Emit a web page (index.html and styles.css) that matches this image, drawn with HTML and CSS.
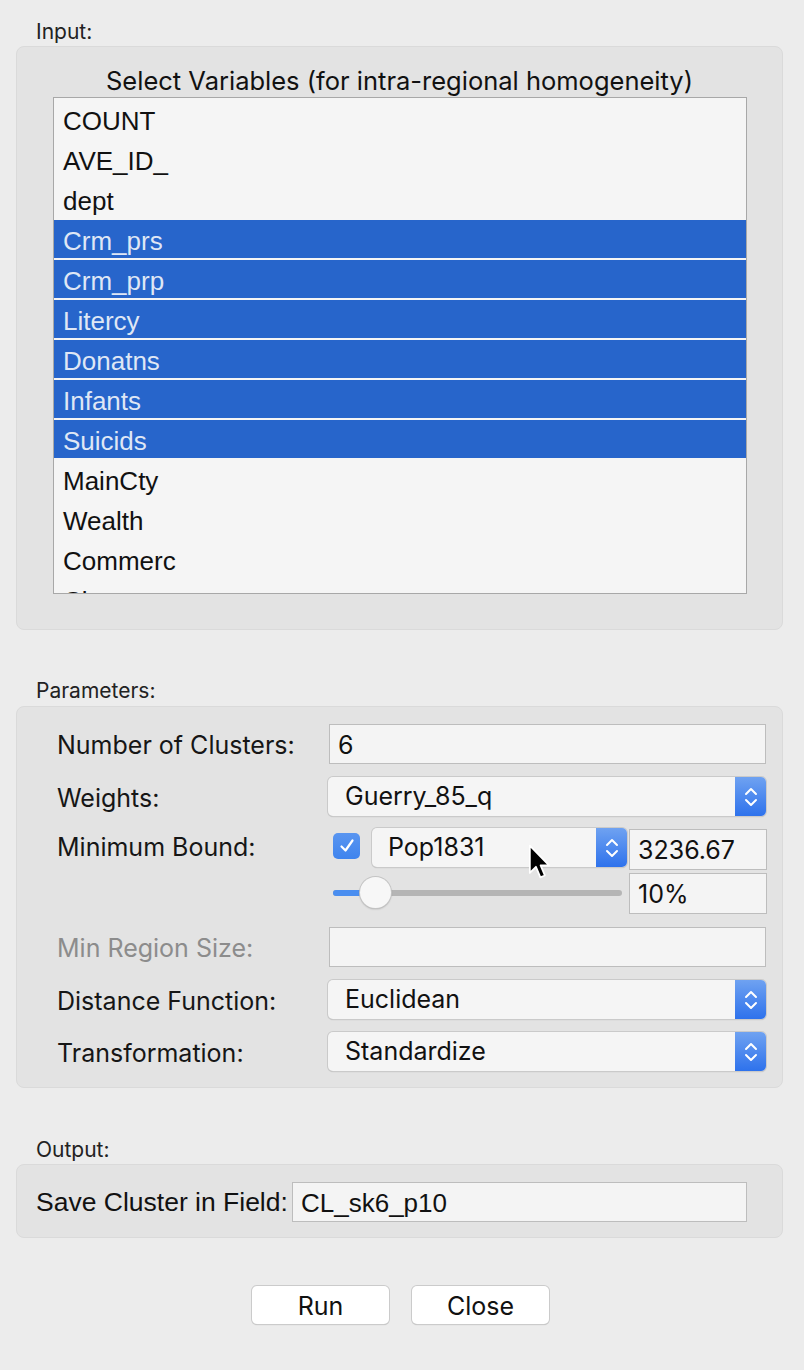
FILE: index.html
```html
<!DOCTYPE html>
<html>
<head>
<meta charset="utf-8">
<link rel="stylesheet" href="styles.css">
</head>
<body>
<div class="dialog">
  <div class="sec-label lbl-input">Input:</div>
  <div class="group input-group">
    <div class="heading">Select Variables (for intra-regional homogeneity)</div>
    <div class="list">
      <div class="row">COUNT</div>
      <div class="row">AVE_ID_</div>
      <div class="row">dept</div>
      <div class="row sel">Crm_prs</div>
      <div class="row sel">Crm_prp</div>
      <div class="row sel">Litercy</div>
      <div class="row sel">Donatns</div>
      <div class="row sel">Infants</div>
      <div class="row sel">Suicids</div>
      <div class="row">MainCty</div>
      <div class="row">Wealth</div>
      <div class="row">Commerc</div>
      <div class="row">Clergy</div>
    </div>
  </div>

  <div class="sec-label lbl-params">Parameters:</div>
  <div class="group params">
    <div class="prow r1">
      <div class="plabel">Number of Clusters:</div>
      <div class="tfield wide">6</div>
    </div>
    <div class="prow r2">
      <div class="plabel">Weights:</div>
      <div class="select wide"><span class="sval">Guerry_85_q</span><span class="stepper"><svg width="16" height="24" viewBox="0 0 16 24"><path d="M3 9 L8 4 L13 9 M3 15 L8 20 L13 15" fill="none" stroke="#fff" stroke-width="2" stroke-linecap="round" stroke-linejoin="round"/></svg></span></div>
    </div>
    <div class="prow r3">
      <div class="plabel">Minimum Bound:</div>
      <div class="bound">
        <div class="bound-top">
          <span class="check"><svg width="18" height="18" viewBox="0 0 18 18"><path d="M3.5 9.5 L7.5 13.5 L14.5 3.5" fill="none" stroke="#fff" stroke-width="2.2" stroke-linecap="round" stroke-linejoin="round"/></svg></span>
          <div class="select small"><span class="sval">Pop1831</span><span class="stepper"><svg width="16" height="24" viewBox="0 0 16 24"><path d="M3 9 L8 4 L13 9 M3 15 L8 20 L13 15" fill="none" stroke="#fff" stroke-width="2" stroke-linecap="round" stroke-linejoin="round"/></svg></span></div>
          <div class="tfield num">3236.67</div>
        </div>
        <div class="bound-bot">
          <div class="slider"><div class="track"><div class="fill"></div></div><div class="knob"></div></div>
          <div class="tfield num pct">10%</div>
        </div>
      </div>
    </div>
    <div class="prow r5">
      <div class="plabel dis">Min Region Size:</div>
      <div class="tfield wide"></div>
    </div>
    <div class="prow r6">
      <div class="plabel">Distance Function:</div>
      <div class="select wide"><span class="sval">Euclidean</span><span class="stepper"><svg width="16" height="24" viewBox="0 0 16 24"><path d="M3 9 L8 4 L13 9 M3 15 L8 20 L13 15" fill="none" stroke="#fff" stroke-width="2" stroke-linecap="round" stroke-linejoin="round"/></svg></span></div>
    </div>
    <div class="prow r7">
      <div class="plabel">Transformation:</div>
      <div class="select wide"><span class="sval">Standardize</span><span class="stepper"><svg width="16" height="24" viewBox="0 0 16 24"><path d="M3 9 L8 4 L13 9 M3 15 L8 20 L13 15" fill="none" stroke="#fff" stroke-width="2" stroke-linecap="round" stroke-linejoin="round"/></svg></span></div>
    </div>
  </div>

  <div class="sec-label lbl-output">Output:</div>
  <div class="group output">
    <div class="olabel">Save Cluster in Field:</div>
    <div class="tfield ofield">CL_sk6_p10</div>
  </div>

  <div class="buttons">
    <div class="btn">Run</div>
    <div class="btn">Close</div>
  </div>
</div>
<svg class="cursor" width="27" height="40" viewBox="0 0 24 36"><path d="M1.5 1.5 L1.5 26 L7 20.5 L11 30 L15 28.3 L11.2 19.2 L18.8 19.2 Z" fill="#000" stroke="#fff" stroke-width="1.6" stroke-linejoin="round"/></svg>
</body>
</html>
```

FILE: styles.css
```css
html, body {
  margin: 0;
  padding: 0;
  background: #ececec;
}
body {
  width: 804px;
  height: 1370px;
  position: relative;
  font-family: "Inter", "Liberation Sans", Arial, sans-serif;
  color: #1c1c1c;
  overflow: hidden;
}
.dialog {
  padding: 0 21px 0 16px;
  display: flex;
  flex-direction: column;
}
.sec-label {
  font-size: 21px;
  line-height: 24px;
  height: 24px;
  padding-left: 20px;
  color: #222;
}
.lbl-input { margin-top: 20px; margin-bottom: 2px; }
.lbl-params { margin-top: 49px; margin-bottom: 3px; }
.lbl-output { margin-top: 50px; margin-bottom: 2px; }
.group {
  background: #e3e3e3;
  border: 1px solid #dadada;
  border-radius: 8px;
  box-sizing: border-box;
}
.input-group {
  height: 584px;
  padding: 18px 0 0 36px;
}
.heading {
  font-size: 25.5px;
  line-height: 31px;
  height: 31px;
  text-align: center;
  padding-right: 36px;
  margin-bottom: 1px;
  color: #111;
  white-space: nowrap;
}
.list {
  width: 694px;
  height: 497px;
  box-sizing: border-box;
  background: #f5f5f5;
  border: 1px solid #a8a8a8;
  overflow: hidden;
  padding-top: 2px;
}
.row {
  height: 40px;
  line-height: 42px;
  font-family: "Liberation Sans", Arial, sans-serif;
  font-size: 26px;
  padding-left: 9px;
  color: #111;
}
.row.sel {
  background: #2765cb;
  color: #dfe7f5;
  height: 38px;
  line-height: 42px;
  border-bottom: 2px solid #f5f5f5;
}
.params {
  height: 382px;
  padding: 17px 16px 0 40px;
  display: flex;
  flex-direction: column;
}
.prow {
  display: flex;
  align-items: flex-start;
  flex: none;
}
.plabel {
  width: 271px;
  font-size: 25px;
  line-height: 42px;
  flex: none;
  color: #161616;
  white-space: nowrap;
}
.plabel.dis { color: #8c8c8c; }
.r1 { height: 40px; }
.r2 { margin-top: 13px; height: 39px; }
.r3 { margin-top: 12px; height: 86px; }
.r3 .plabel { line-height: 38px; }
.r5 { margin-top: 13px; height: 40px; }
.r6 { margin-top: 13px; height: 39px; }
.r7 { margin-top: 13px; height: 39px; }
.tfield {
  box-sizing: border-box;
  height: 40px;
  background: #f4f4f4;
  border: 1px solid #bdbdbd;
  font-size: 25px;
  line-height: 41px;
  padding-left: 8px;
  color: #111;
  white-space: nowrap;
}
.tfield.wide { width: 438px; margin-left: 1px; }
.select {
  box-sizing: border-box;
  height: 39px;
  background: #f5f5f5;
  border-radius: 5px;
  box-shadow: 0 0 0 1px #cacaca, 0 1px 1px rgba(0,0,0,0.25);
  display: flex;
  align-items: center;
  overflow: hidden;
  font-size: 25px;
  color: #111;
}
.select.wide { width: 438px; }
.sval { flex: 1; padding-left: 17px; line-height: 41px; white-space: nowrap; }
.select.small .sval { padding-left: 16px; }
.stepper {
  width: 31px;
  height: 100%;
  background: linear-gradient(#6fa2f1, #2e72ec);
  display: flex;
  align-items: center;
  justify-content: center;
}
.bound { display: flex; flex-direction: column; }
.bound-top { display: flex; align-items: flex-start; height: 41px; }
.check {
  width: 27px;
  height: 26px;
  margin-top: 5px;
  margin-left: 5px;
  border-radius: 5px;
  background: linear-gradient(#5995f0, #3f84ee);
  display: flex;
  align-items: center;
  justify-content: center;
}
.select.small { width: 255px; margin-left: 12px; }
.tfield.num { width: 138px; margin-left: 2px; margin-top: 1px; height: 41px; }
.bound-bot { display: flex; margin-top: 4px; }
.slider {
  width: 289px;
  height: 40px;
  margin-left: 5px;
  position: relative;
}
.track {
  position: absolute;
  left: 0; right: 0; top: 17px;
  height: 6px;
  border-radius: 3px;
  background: #b5b5b5;
  overflow: hidden;
}
.fill { width: 30px; height: 100%; background: #4a8ef0; }
.knob {
  position: absolute;
  left: 27px;
  top: 4px;
  width: 31px;
  height: 31px;
  border-radius: 50%;
  background: #f7f7f7;
  box-shadow: 0 0 0 1px #c4c4c4, 0 1px 2px rgba(0,0,0,0.3);
}
.tfield.pct { margin-left: 7px; margin-top: 0; height: 41px; }
.output {
  height: 74px;
  display: flex;
  align-items: center;
  padding-left: 19px;
  padding-top: 2px;
}
.olabel {
  font-family: "Liberation Sans", Arial, sans-serif;
  font-size: 26.5px;
  width: 256px;
  flex: none;
  white-space: nowrap;
  color: #111;
}
.ofield {
  width: 455px;
  font-family: "Liberation Sans", Arial, sans-serif;
  font-size: 26px;
}
.buttons {
  display: flex;
  justify-content: center;
  gap: 23px;
  margin-top: 48px;
  padding-left: 2px;
}
.btn {
  width: 137px;
  height: 38px;
  box-sizing: border-box;
  background: #fff;
  border-radius: 5px;
  box-shadow: 0 0 0 1px #cbcbcb, 0 1px 1px rgba(0,0,0,0.25);
  text-align: center;
  font-size: 25px;
  line-height: 40px;
  color: #111;
}
.cursor {
  position: absolute;
  left: 528px;
  top: 844px;
}
```
